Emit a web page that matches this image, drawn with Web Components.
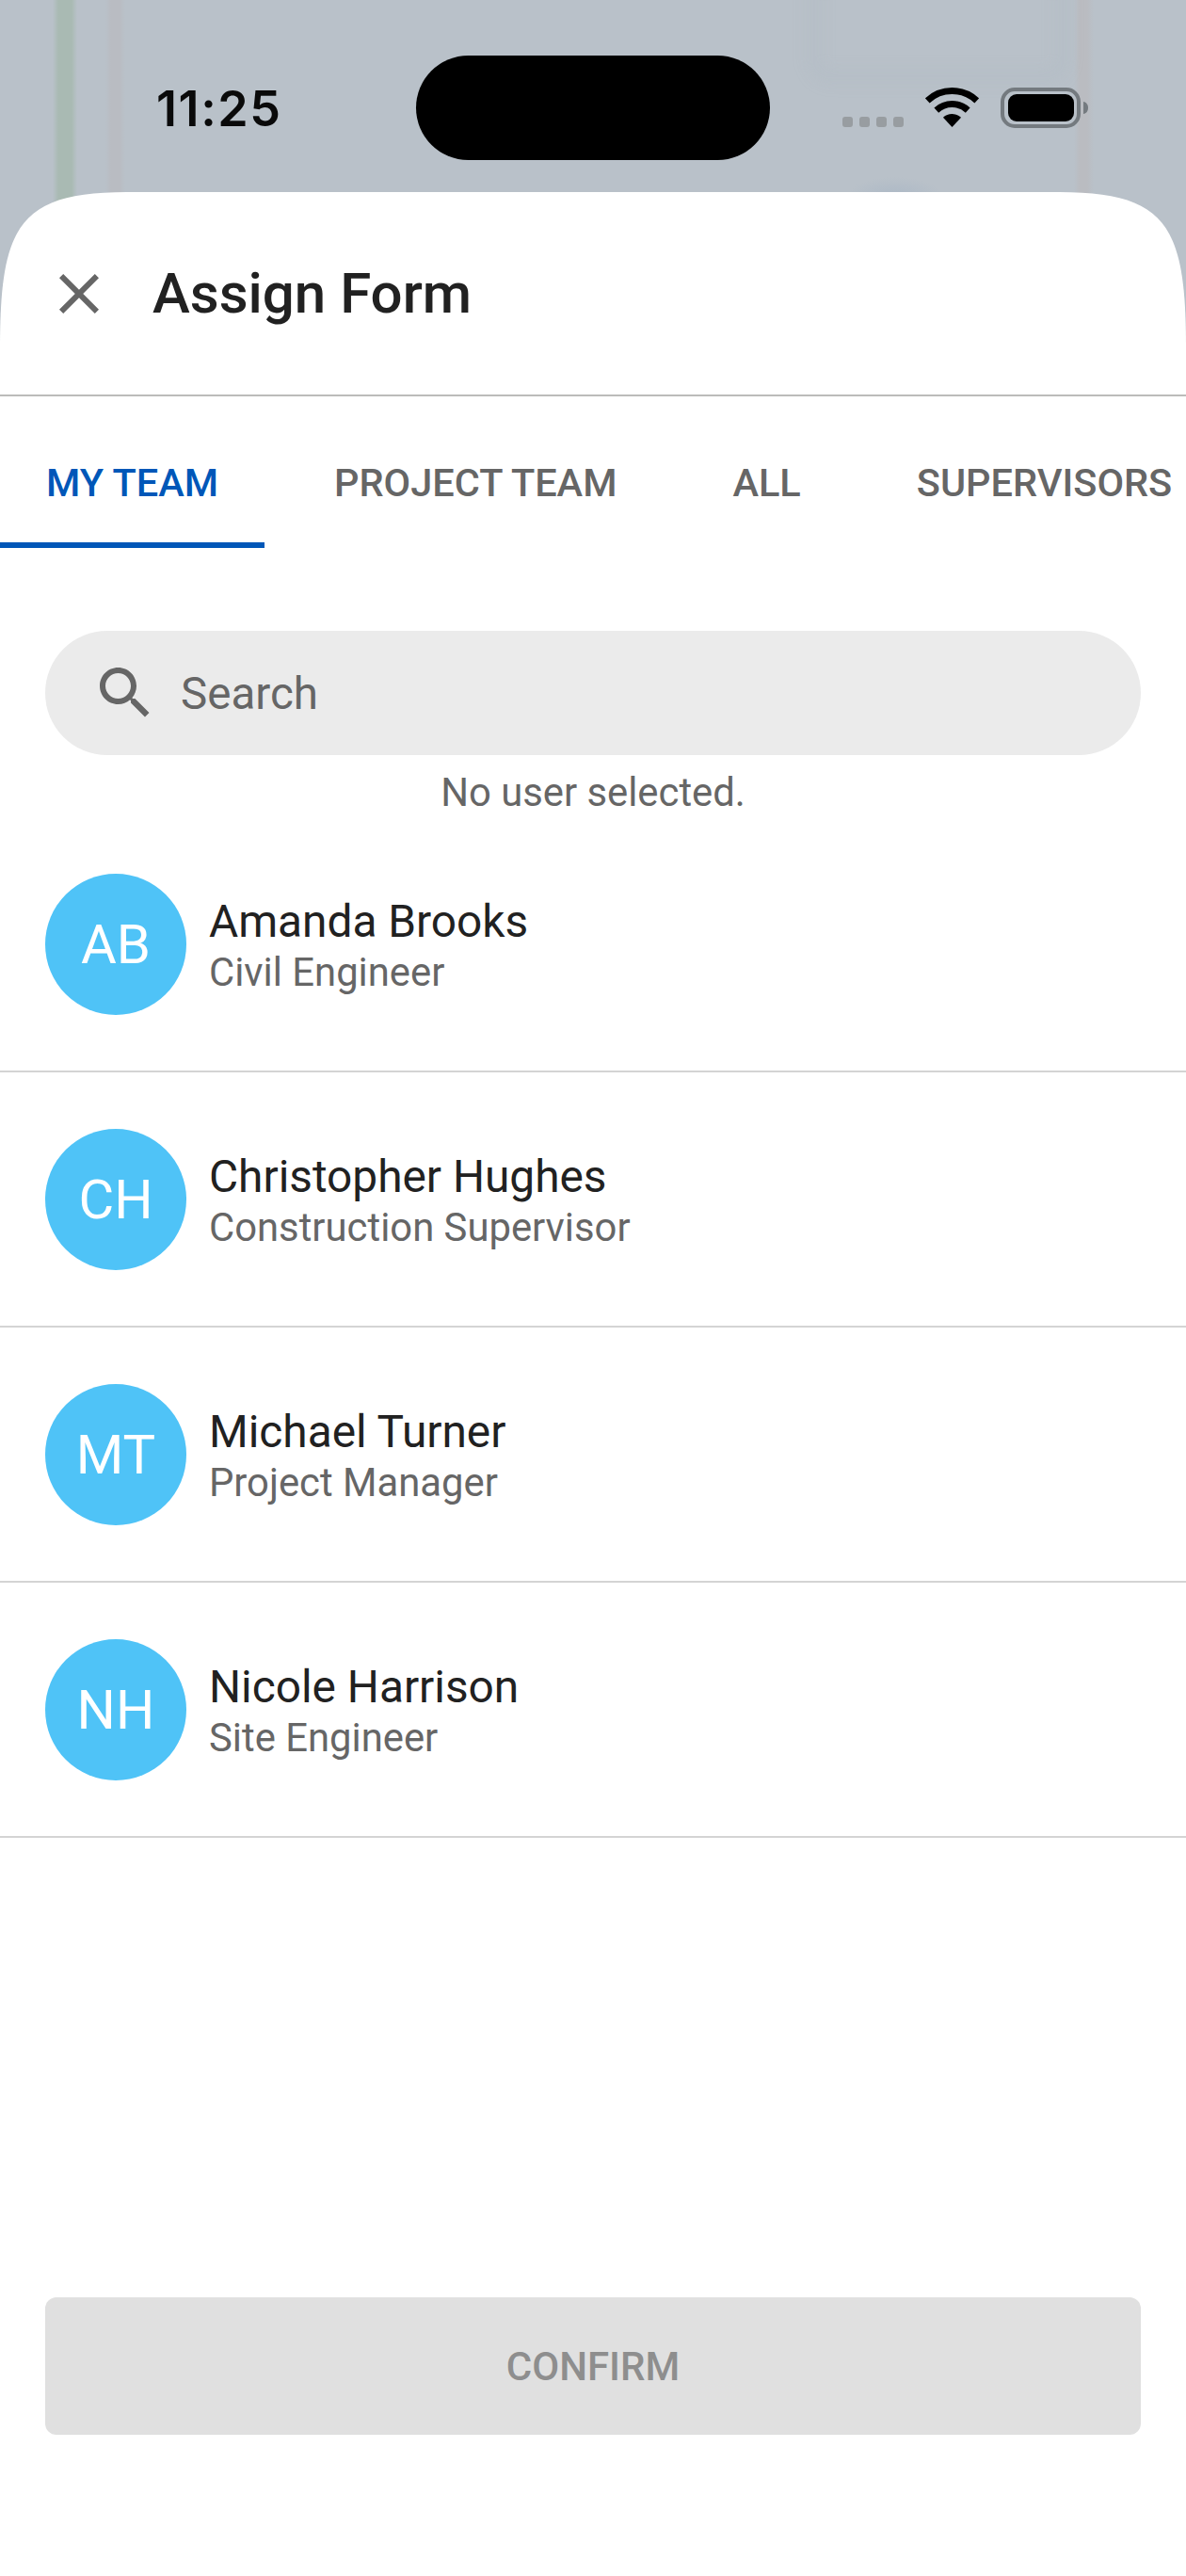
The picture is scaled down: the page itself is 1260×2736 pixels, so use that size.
<!DOCTYPE html>
<html lang="en">
<head>
<meta charset="utf-8">
<title>Assign Form</title>
<style>
    html, body {
        margin: 0;
        height: 100%;
    }

    body {
        font-family: Roboto, "Liberation Sans", sans-serif;
    }
</style>
</head>
<body>

<assign-screen>
    <status-bar slot="status"></status-bar>
    <sheet-header slot="header">Assign Form</sheet-header>
    <tab-bar slot="tabs">
        <tab-item active>MY TEAM</tab-item>
        <tab-item>PROJECT TEAM</tab-item>
        <tab-item>ALL</tab-item>
        <tab-item>SUPERVISORS</tab-item>
    </tab-bar>
    <search-field slot="search" placeholder="Search" note="No user selected."></search-field>
    <user-row slot="users" initials="AB">
        <span slot="name">Amanda Brooks</span>
        <span slot="role">Civil Engineer</span>
    </user-row>
    <user-row slot="users" initials="CH">
        <span slot="name">Christopher Hughes</span>
        <span slot="role">Construction Supervisor</span>
    </user-row>
    <user-row slot="users" initials="MT">
        <span slot="name">Michael Turner</span>
        <span slot="role">Project Manager</span>
    </user-row>
    <user-row slot="users" initials="NH">
        <span slot="name">Nicole Harrison</span>
        <span slot="role">Site Engineer</span>
    </user-row>
    <confirm-button slot="footer">CONFIRM</confirm-button>
</assign-screen>

<script>
class AssignScreen extends HTMLElement {
    constructor() {
        super();
        this.attachShadow({ mode: 'open' });
        this.shadowRoot.innerHTML = /* html */`
            <style>
                :host {
                    position: relative;
                    display: flex;
                    flex-direction: column;
                    height: 2736px;
                    overflow: hidden;
                    background-color: #b9c1c9;
                    /* blurred map behind the sheet */
                    background-image:
                        radial-gradient(ellipse 50px 20px at 951px 208px, #adb9c6, transparent),
                        linear-gradient(to right, transparent 56px, #a9bab3 62px, #a9bab3 76px, transparent 82px,
                            transparent 112px, #b9bcc2 118px, #b9bcc2 127px, transparent 133px,
                            transparent 1141px, #babcc1 1147px, #babcc1 1155px, transparent 1162px);
                    background-repeat: no-repeat;
                }

                .map-block {
                    position: absolute;
                    left: 858px;
                    top: -30px;
                    width: 250px;
                    height: 90px;
                    border: 14px solid rgba(160, 170, 180, 0.12);
                    border-radius: 24px;
                    filter: blur(8px);
                }

                .sheet {
                    position: relative;
                    flex: 1;
                    display: flex;
                    flex-direction: column;
                    min-height: 0;
                    background: #fff;
                    clip-path: path('M0 166C0 36 20 0 135 0L1125 0C1240 0 1260 36 1260 166L1260 2532L0 2532Z');
                }

                .users {
                    flex: 1;
                    display: flex;
                    flex-direction: column;
                }
            </style>
            <div class="map-block"></div>
            <slot name="status"></slot>
            <div class="sheet">
                <slot name="header"></slot>
                <slot name="tabs"></slot>
                <slot name="search"></slot>
                <div class="users"><slot name="users"></slot></div>
                <slot name="footer"></slot>
            </div>
        `;
    }
}

class StatusBar extends HTMLElement {
    constructor() {
        super();
        this.attachShadow({ mode: 'open' });
        this.shadowRoot.innerHTML = /* html */`
            <style>
                :host {
                    position: relative;
                    display: flex;
                    align-items: flex-start;
                    height: 204px;
                    box-sizing: border-box;
                    padding: 59px 0 0 166px;
                }

                .time {
                    width: 276px;
                    height: 111px;
                    font: 600 52px/114px Inter, Roboto, sans-serif;
                    letter-spacing: 1.6px;
                    color: #0a0a0a;
                }

                .island {
                    width: 376px;
                    height: 111px;
                    border-radius: 56px;
                    background: #000;
                }

                .icons {
                    display: flex;
                    align-items: flex-start;
                    margin: 34px 0 0 77px;
                }

                .dots {
                    display: flex;
                    gap: 7px;
                    margin: 31px 0 0 0;
                }

                .dots i {
                    width: 11px;
                    height: 11px;
                    border-radius: 3px;
                    background: #989da1;
                }

                .wifi {
                    display: block;
                    margin-left: 23px;
                }

                .battery {
                    display: block;
                    margin-left: 23px;
                }
            </style>
            <div class="time">11:25</div>
            <div class="island"></div>
            <div class="icons">
                <div class="dots"><i></i><i></i><i></i><i></i></div>
                <svg class="wifi" width="57" height="42" viewBox="0 0 57 42">
                    <path d="M2.24 13.85A38.5 38.5 0 0 1 54.76 13.85" fill="none" stroke="#000" stroke-width="7"/>
                    <path d="M11.8 24.1A24.5 24.5 0 0 1 45.2 24.1" fill="none" stroke="#000" stroke-width="7"/>
                    <path d="M28.5 42L18.95 31.8A14 14 0 0 1 38.05 31.8Z" fill="#000"/>
                </svg>
                <svg class="battery" width="93" height="43" viewBox="0 0 93 43">
                    <rect x="2" y="2" width="81" height="39" rx="13" fill="none" stroke="#747a7f" stroke-width="4"/>
                    <rect x="8" y="7" width="70" height="29" rx="9" fill="#000"/>
                    <path d="M88 15c3 .5 5 3 5 6.500s-2 6-5 6.500z" fill="#747a7f"/>
                </svg>
            </div>
        `;
    }
}

class SheetHeader extends HTMLElement {
    constructor() {
        super();
        this.attachShadow({ mode: 'open' });
        this.shadowRoot.innerHTML = /* html */`
            <style>
                :host {
                    display: flex;
                    align-items: center;
                    gap: 42px;
                    height: 217px;
                    box-sizing: border-box;
                    padding: 0 48px;
                    border-bottom: 2px solid #bcbcba;
                    font: 500 60px Roboto, sans-serif;
                    color: #212121;
                }

                svg {
                    flex: none;
                    fill: #666;
                }
            </style>
            <svg width="72" height="72" viewBox="0 0 24 24">
                <path d="M19 6.410L17.590 5 12 10.590 6.410 5 5 6.410 10.590 12 5 17.590 6.410 19 12 13.410 17.590 19 19 17.590 13.410 12z"/>
            </svg>
            <slot></slot>
        `;
    }
}

class TabBar extends HTMLElement {
    constructor() {
        super();
        this.attachShadow({ mode: 'open' });
        this.shadowRoot.innerHTML = /* html */`
            <style>
                :host {
                    display: flex;
                    gap: 25px;
                    height: 161px;
                    overflow: hidden;
                }
            </style>
            <slot></slot>
        `;
    }
}

class TabItem extends HTMLElement {
    constructor() {
        super();
        this.attachShadow({ mode: 'open' });
        this.shadowRoot.innerHTML = /* html */`
            <style>
                :host {
                    display: flex;
                    flex: none;
                    align-items: center;
                    box-sizing: border-box;
                    padding: 27px 49px 0;
                    border-bottom: 6px solid transparent;
                    font: 500 41.5px Roboto, sans-serif;
                    color: #666;
                    white-space: nowrap;
                }

                :host([active]) {
                    color: #0057b8;
                    border-bottom-color: #0057b8;
                }
            </style>
            <slot></slot>
        `;
    }
}

class SearchField extends HTMLElement {
    constructor() {
        super();
        this.attachShadow({ mode: 'open' });
        this.shadowRoot.innerHTML = /* html */`
            <style>
                :host {
                    display: block;
                    padding: 88px 48px 0;
                }

                .box {
                    display: flex;
                    align-items: center;
                    gap: 23px;
                    height: 132px;
                    box-sizing: border-box;
                    padding-left: 49px;
                    border-radius: 66px;
                    background: #ebebeb;
                    font-size: 47.5px;
                    color: #666;
                }

                .label {
                    padding-top: 2px;
                }

                svg {
                    flex: none;
                    fill: #666;
                }

                .note {
                    height: 66px;
                    line-height: 80px;
                    text-align: center;
                    font-size: 41.8px;
                    color: #666;
                }
            </style>
            <div class="box">
                <svg width="72" height="72" viewBox="0 0 24 24">
                    <path d="M15.500 14h-.790l-.280-.270C15.410 12.590 16 11.110 16 9.500 16 5.910 13.090 3 9.500 3S3 5.910 3 9.500 5.910 16 9.500 16c1.610 0 3.090-.590 4.230-1.570l.270.280v.790l5 4.990L20.490 19l-4.990-5zm-6 0C7.010 14 5 11.990 5 9.500S7.010 5 9.500 5 14 7.010 14 9.500 11.990 14 9.500 14z"/>
                </svg>
                <span class="label"></span>
            </div>
            <div class="note"></div>
        `;
    }

    connectedCallback() {
        this.shadowRoot.querySelector('.label').textContent = this.getAttribute('placeholder');
        this.shadowRoot.querySelector('.note').textContent = this.getAttribute('note');
    }
}

class UserRow extends HTMLElement {
    constructor() {
        super();
        this.attachShadow({ mode: 'open' });
        this.shadowRoot.innerHTML = /* html */`
            <style>
                :host {
                    display: flex;
                    align-items: center;
                    gap: 24px;
                    height: 271px;
                    box-sizing: border-box;
                    padding: 0 48px;
                    border-bottom: 2px solid #d4d4d4;
                }

                .avatar {
                    flex: none;
                    display: flex;
                    align-items: center;
                    justify-content: center;
                    width: 150px;
                    height: 150px;
                    border-radius: 50%;
                    background: #4fc3f7;
                    font-size: 58px;
                    color: #fff;
                }

                .text {
                    padding-top: 6px;
                }

                .name, .role {
                    display: block;
                    line-height: 54px;
                }

                .name {
                    font-size: 47.8px;
                    color: #212121;
                }

                .role {
                    font-size: 41.8px;
                    color: #666;
                }
            </style>
            <div class="avatar"></div>
            <div class="text">
                <div class="name"><slot name="name"></slot></div>
                <div class="role"><slot name="role"></slot></div>
            </div>
        `;
    }

    connectedCallback() {
        this.shadowRoot.querySelector('.avatar').textContent = this.getAttribute('initials');
    }
}

class ConfirmButton extends HTMLElement {
    constructor() {
        super();
        this.attachShadow({ mode: 'open' });
        this.shadowRoot.innerHTML = /* html */`
            <style>
                :host {
                    display: block;
                    padding: 0 48px 150px;
                }

                .btn {
                    display: flex;
                    align-items: center;
                    justify-content: center;
                    height: 146px;
                    border-radius: 12px;
                    background: #e0e0e0;
                    font: 500 42px Roboto, sans-serif;
                    color: #8e8e8e;
                }
            </style>
            <div class="btn"><slot></slot></div>
        `;
    }
}

window.customElements.define("assign-screen", AssignScreen);
window.customElements.define("status-bar", StatusBar);
window.customElements.define("sheet-header", SheetHeader);
window.customElements.define("tab-bar", TabBar);
window.customElements.define("tab-item", TabItem);
window.customElements.define("search-field", SearchField);
window.customElements.define("user-row", UserRow);
window.customElements.define("confirm-button", ConfirmButton);
</script>
</body>
</html>
